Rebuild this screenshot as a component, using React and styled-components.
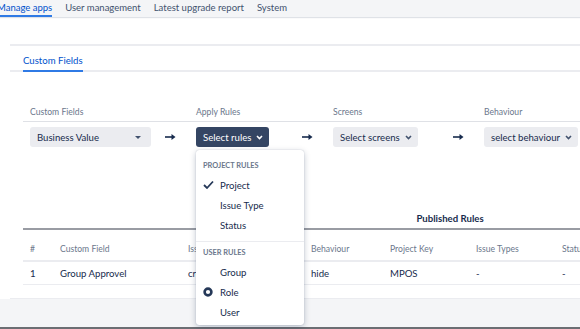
import React from "react"
import styled, { createGlobalStyle } from "styled-components"

const GlobalStyle = createGlobalStyle`
	html, body {
		margin: 0;
		padding: 0;
		overflow: hidden;
		background: #ffffff;
	}
	body {
		font-family: Lato, "Noto Sans", sans-serif;
		color: #172b4d;
		width: 580px;
		height: 329px;
	}
`

const Page = styled.div`
	width: 580px;
	height: 329px;
	display: flex;
	flex-direction: column;
	overflow: hidden;
`

const Nav = styled.nav`
	height: 17px;
	flex: none;
	background: #f4f5f7;
	box-shadow: 0 1px 1px rgba(9, 30, 66, 0.13);
	display: flex;
	align-items: stretch;
	gap: 13px;
	margin-left: -3px;
	position: relative;
	z-index: 1;
`

const NavItem = styled.a`
	font-size: 9.5px;
	line-height: 15px;
	color: ${(p) => (p.active ? "#0052cc" : "#42526e")};
	box-shadow: ${(p) => (p.active ? "inset 0 -2px 0 #2f7ae5" : "none")};
	white-space: nowrap;
	text-decoration: none;
`

const Content = styled.main`
	flex: 1;
	padding: 27px 0 0 10px;
	background: #ffffff;
`

const Panel = styled.section`
	width: 900px;
	border-top: 2px solid #ebecf0;
	border-bottom: 1px solid #ebecf0;
	padding-bottom: 13px;
`

const TabBar = styled.div`
	display: flex;
	padding-left: 13px;
	border-bottom: 2px solid #ebecf0;
	height: 24px;
`

const Tab = styled.div`
	font-size: 9.6px;
	color: #0052cc;
	display: flex;
	align-items: center;
	padding-top: 2px;
	box-shadow: inset 0 -2px 0 #2f7ae5;
	margin-bottom: -2px;
`

const Rules = styled.div`
	margin: 35px 0 0 13px;
	width: 557px;
`

const RuleGrid = styled.div`
	display: grid;
	grid-template-columns: 166px 137px 151px 1fr;
	padding-left: 7px;
	${(p) => (p.head ? "border-bottom: 1px solid #dfe1e6; height: 14px; align-items: start;" : "padding-top: 5px;")}
`

const Label = styled.div`
	font-size: 8.6px;
	color: #6b778c;
	line-height: 11px;
`

const Cell = styled.div`
	display: flex;
	align-items: center;
	position: relative;
`

const Select = styled.div`
	height: 20px;
	box-sizing: border-box;
	border-radius: 3px;
	background: ${(p) => (p.dark ? "#344563" : "#ebecf0")};
	color: ${(p) => (p.dark ? "#ffffff" : "#172b4d")};
	font-size: 9.6px;
	display: flex;
	align-items: center;
	justify-content: space-between;
	padding: 0 6px 0 7px;
	min-width: ${(p) => p.w || 0}px;
	white-space: nowrap;
`

const Caret = styled.span`
	display: inline-block;
	width: 0;
	height: 0;
	border-left: 3px solid transparent;
	border-right: 3px solid transparent;
	border-top: 3px solid #42526e;
	margin-right: 4px;
`

const ArrowWrap = styled.span`
	width: 11px;
	height: 8px;
	margin: 0 20px 0 auto;
	display: inline-flex;
`

const Menu = styled.div`
	position: absolute;
	top: 23px;
	left: 0;
	width: 108px;
	background: #ffffff;
	border-radius: 3px;
	box-shadow: 0 2px 6px rgba(9, 30, 66, 0.25), 0 0 1px rgba(9, 30, 66, 0.31);
	padding: 9px 0 3px;
	z-index: 5;
`

const MenuGroup = styled.div`
	& + & {
		border-top: 1px solid #ebecf0;
		margin-top: 6px;
		padding-top: 4px;
	}
`

const MenuHeading = styled.div`
	font-size: 7.4px;
	font-weight: 700;
	color: #6b778c;
	text-transform: uppercase;
	padding-left: 7px;
	line-height: 14px;
	margin-bottom: 2px;
`

const MenuItem = styled.div`
	font-size: 9.6px;
	color: #172b4d;
	height: 20px;
	display: flex;
	align-items: center;
	padding-left: 24px;
	position: relative;
`

const Mark = styled.span`
	position: absolute;
	left: ${(p) => p.left}px;
	top: 50%;
	transform: translateY(-50%);
	display: inline-flex;
`

const Published = styled.div`
	margin: 65px 0 0 13px;
	width: 854px;
`

const Title = styled.h3`
	margin: 0;
	text-align: center;
	font-size: 9.6px;
	font-weight: 700;
	line-height: 13px;
	padding-bottom: 3px;
`

const Table = styled.table`
	width: 100%;
	border-collapse: collapse;
	border-top: 2px solid #999ca3;
	table-layout: fixed;
`

const Th = styled.th`
	box-sizing: border-box;
	text-align: left;
	font-weight: 400;
	font-size: 8.6px;
	color: #6b778c;
	padding: 14px 0 5px 7px;
	line-height: 11px;
	border-bottom: 2px solid #ebecf0;
	width: ${(p) => (p.w ? p.w + "px" : "auto")};
	white-space: nowrap;
	overflow: hidden;
`

const Td = styled.td`
	font-size: 9.6px;
	color: #172b4d;
	padding: 6px 0 4px 7px;
	border-bottom: 1px solid #ebecf0;
	white-space: nowrap;
	overflow: hidden;
	line-height: 12px;
`

const Footer = styled.div`
	height: 28px;
	flex: none;
	background: #f4f5f7;
	border-bottom: 2px solid #6b6e73;
`

function RightArrow() {
	return (
		<ArrowWrap>
			<svg width="11" height="8" viewBox="0 0 11 8">
				<path d="M0 4h8" stroke="#172b4d" strokeWidth="1.6" />
				<path d="M6.5 1L10.5 4L6.5 7Z" fill="#172b4d" />
			</svg>
		</ArrowWrap>
	)
}

function Chevron({ color }) {
	return (
		<svg width="7" height="5" viewBox="0 0 7 5" style={{ marginLeft: 5 }}>
			<path d="M1 1l2.5 2.5L6 1" fill="none" stroke={color} strokeWidth="1.6" />
		</svg>
	)
}

const columns = [
	{ name: "#", w: 30 },
	{ name: "Custom Field", w: 128 },
	{ name: "Issue Event", w: 123 },
	{ name: "Behaviour", w: 79 },
	{ name: "Project Key", w: 86 },
	{ name: "Issue Types", w: 86 },
	{ name: "Status" },
]

const row = ["1", "Group Approvel", "create", "hide", "MPOS", "-", "-"]

export default function App() {
	return (
		<Page>
			<GlobalStyle />
			<Nav>
				<NavItem active>Manage apps</NavItem>
				<NavItem>User management</NavItem>
				<NavItem>Latest upgrade report</NavItem>
				<NavItem>System</NavItem>
			</Nav>
			<Content>
				<Panel>
					<TabBar>
						<Tab>Custom Fields</Tab>
					</TabBar>
					<Rules>
						<RuleGrid head>
							<Label>Custom Fields</Label>
							<Label>Apply Rules</Label>
							<Label>Screens</Label>
							<Label>Behaviour</Label>
						</RuleGrid>
						<RuleGrid>
							<Cell>
								<Select w={121}>
									Business Value
									<Caret />
								</Select>
								<RightArrow />
							</Cell>
							<Cell>
								<Select dark>
									Select rules
									<Chevron color="#ffffff" />
								</Select>
								<RightArrow />
								<Menu>
									<MenuGroup>
										<MenuHeading>Project rules</MenuHeading>
										<MenuItem>
											<Mark left={7}>
												<svg width="11" height="9" viewBox="0 0 11 9">
													<path d="M1 4.5l3 3L10 1" fill="none" stroke="#253858" strokeWidth="1.8" />
												</svg>
											</Mark>
											Project
										</MenuItem>
										<MenuItem>Issue Type</MenuItem>
										<MenuItem>Status</MenuItem>
									</MenuGroup>
									<MenuGroup>
										<MenuHeading>User rules</MenuHeading>
										<MenuItem>Group</MenuItem>
										<MenuItem>
											<Mark left={7}>
												<svg width="10" height="10" viewBox="0 0 10 10">
													<circle cx="5" cy="5" r="3.4" fill="none" stroke="#253858" strokeWidth="2.6" />
												</svg>
											</Mark>
											Role
										</MenuItem>
										<MenuItem>User</MenuItem>
									</MenuGroup>
								</Menu>
							</Cell>
							<Cell>
								<Select>
									Select screens
									<Chevron color="#42526e" />
								</Select>
								<RightArrow />
							</Cell>
							<Cell>
								<Select>
									select behaviour
									<Chevron color="#42526e" />
								</Select>
							</Cell>
						</RuleGrid>
					</Rules>
					<Published>
						<Title>Published Rules</Title>
						<Table>
							<thead>
								<tr>
									{columns.map((c) => (
										<Th key={c.name} w={c.w}>
											{c.name}
										</Th>
									))}
								</tr>
							</thead>
							<tbody>
								<tr>
									{row.map((v, i) => (
										<Td key={i}>{v}</Td>
									))}
								</tr>
							</tbody>
						</Table>
					</Published>
				</Panel>
			</Content>
			<Footer />
		</Page>
	)
}
